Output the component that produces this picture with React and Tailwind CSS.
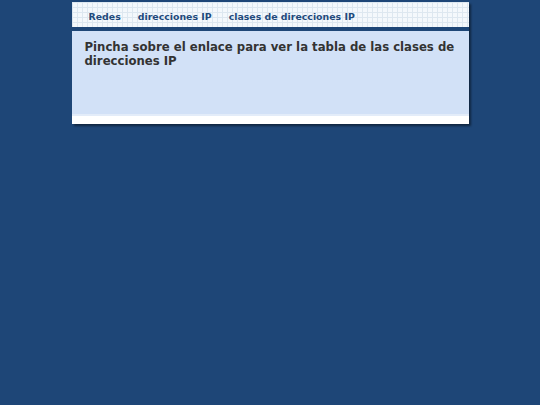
export default function App() {
  return (
    <div className="min-h-[405px] w-full bg-[#1e4677] pt-[2px]" style={{ fontFamily: '"DejaVu Sans", Verdana, sans-serif' }}>
      <div className="mx-auto w-[397px] bg-white shadow-[2px_2px_2px_rgba(0,0,0,0.45)]">
        <div className="h-[25px] bg-[#f4f8fc] bg-[linear-gradient(to_right,#dde7f0_1px,transparent_1px),linear-gradient(to_bottom,#dde7f0_1px,transparent_1px)] bg-[size:5px_5px] flex items-end pb-[3px] pl-[17px] gap-[17px] text-[9.4px] font-bold text-[#1f4a7c]">
          <span>Redes</span>
          <span>direcciones IP</span>
          <span>clases de direcciones IP</span>
        </div>
        <div className="h-[4px] bg-[#1e4677]" />
        <div className="h-[83px] bg-[#d2e1f7] pl-[13px] pr-[8px] pt-[9px]">
          <h1 className="text-[11.7px] font-bold leading-[14px] text-[#333333]">
            Pincha sobre el enlace para ver la tabla de las clases de direcciones IP
          </h1>
        </div>
        <div className="h-[2px] bg-[#e3ecf9]" />
        <div className="h-[8px] bg-white" />
      </div>
    </div>
  );
}
